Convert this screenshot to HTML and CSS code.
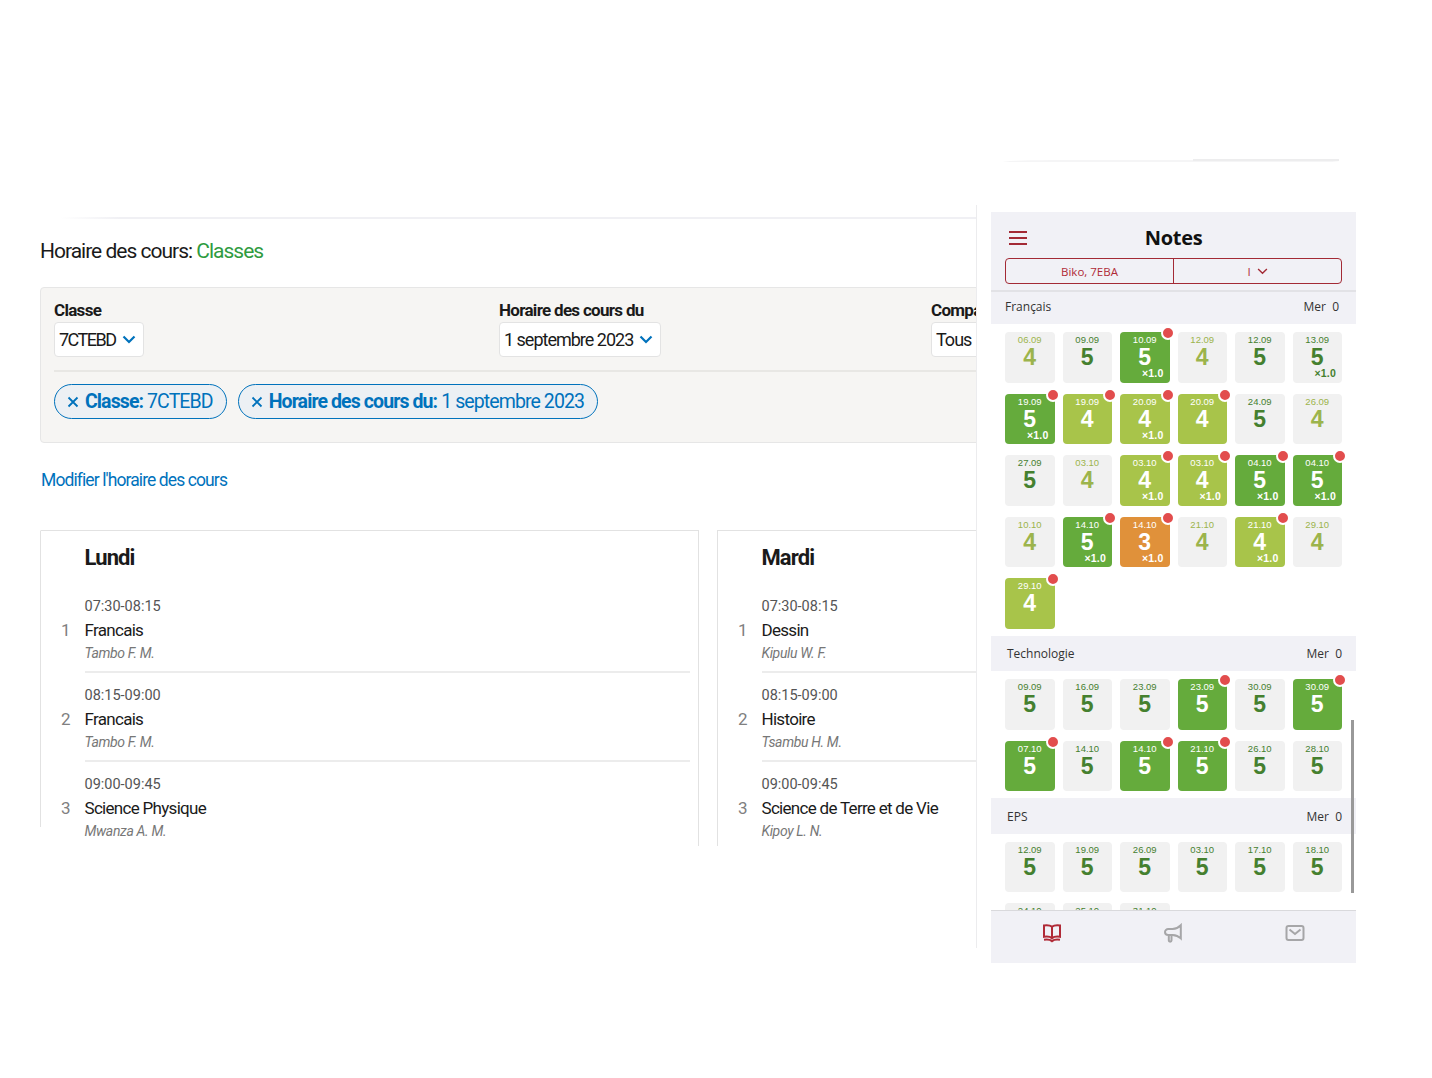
FILE: index.html
```html
<!DOCTYPE html>
<html lang="fr">
<head>
	<meta charset="utf-8">
	<title>Horaire des cours</title>
	<link rel="stylesheet" href="styles.css">
</head>
<body>
	<div class="stage">
		<section class="desk">
			<div class="topline"></div>
			<h1 class="title">Horaire des cours: <span class="green">Classes</span></h1>
			<div class="filters">
				<div class="fields">
					<div class="field field-class">
						<label>Classe</label>
						<div class="select">7CTEBD <svg class="chev" viewBox="0 0 14 9"><path d="M1.5 1.5 7 7l5.5-5.5"/></svg></div>
					</div>
					<div class="field field-date">
						<label>Horaire des cours du</label>
						<div class="select">1 septembre 2023 <svg class="chev" viewBox="0 0 14 9"><path d="M1.5 1.5 7 7l5.5-5.5"/></svg></div>
					</div>
					<div class="field field-comp">
						<label>Compagnie</label>
						<div class="select">Tous <svg class="chev" viewBox="0 0 14 9"><path d="M1.5 1.5 7 7l5.5-5.5"/></svg></div>
					</div>
				</div>
				<div class="chips">
					<span class="chip"><svg class="cross" viewBox="0 0 12 12"><path d="M1.5 1.5l9 9M10.5 1.5l-9 9"/></svg><b>Classe:</b> 7CTEBD</span>
					<span class="chip"><svg class="cross" viewBox="0 0 12 12"><path d="M1.5 1.5l9 9M10.5 1.5l-9 9"/></svg><b>Horaire des cours du:</b> 1 septembre 2023</span>
				</div>
			</div>
			<a class="edit" href="#">Modifier l'horaire des cours</a>
			<div class="days">
				<article class="day day-first">
					<h2>Lundi</h2>
					<div class="lesson">
						<div class="time">07:30-08:15</div>
						<div class="name"><span class="num">1</span>Francais</div>
						<div class="teacher">Tambo F. M.</div>
					</div>
					<div class="lesson">
						<div class="time">08:15-09:00</div>
						<div class="name"><span class="num">2</span>Francais</div>
						<div class="teacher">Tambo F. M.</div>
					</div>
					<div class="lesson">
						<div class="time">09:00-09:45</div>
						<div class="name"><span class="num">3</span>Science Physique</div>
						<div class="teacher">Mwanza A. M.</div>
					</div>
				</article>
				<article class="day">
					<h2>Mardi</h2>
					<div class="lesson">
						<div class="time">07:30-08:15</div>
						<div class="name"><span class="num">1</span>Dessin</div>
						<div class="teacher">Kipulu W. F.</div>
					</div>
					<div class="lesson">
						<div class="time">08:15-09:00</div>
						<div class="name"><span class="num">2</span>Histoire</div>
						<div class="teacher">Tsambu H. M.</div>
					</div>
					<div class="lesson">
						<div class="time">09:00-09:45</div>
						<div class="name"><span class="num">3</span>Science de Terre et de Vie</div>
						<div class="teacher">Kipoy L. N.</div>
					</div>
				</article>
			</div>
		</section>

		<div class="side">
			<div class="smudge"><span></span></div>
			<section class="phone">
				<header class="bar">
					<div class="bar-top">
						<div class="burger"><i></i><i></i><i></i></div>
						<h2>Notes</h2>
					</div>
					<div class="switch">
						<span>Biko, 7EBA</span>
						<span>I <svg class="chev-red" viewBox="0 0 12 8"><path d="M1 1.2 6 6l5-4.8"/></svg></span>
					</div>
				</header>
				<div class="notes">
					<div class="subject first"><span>Français</span><span>Mer&nbsp; 0</span></div>
					<div class="tiles tiles-first">
						<div class="tile pale4"><span class="date">06.09</span><span class="mark">4</span></div>
						<div class="tile pale5"><span class="date">09.09</span><span class="mark">5</span></div>
						<div class="tile fill5 new"><span class="date">10.09</span><span class="mark">5</span><span class="coef">×1.0</span></div>
						<div class="tile pale4"><span class="date">12.09</span><span class="mark">4</span></div>
						<div class="tile pale5"><span class="date">12.09</span><span class="mark">5</span></div>
						<div class="tile pale5"><span class="date">13.09</span><span class="mark">5</span><span class="coef">×1.0</span></div>
						<div class="tile fill5 new"><span class="date">19.09</span><span class="mark">5</span><span class="coef">×1.0</span></div>
						<div class="tile fill4 new"><span class="date">19.09</span><span class="mark">4</span></div>
						<div class="tile fill4 new"><span class="date">20.09</span><span class="mark">4</span><span class="coef">×1.0</span></div>
						<div class="tile fill4 new"><span class="date">20.09</span><span class="mark">4</span></div>
						<div class="tile pale5"><span class="date">24.09</span><span class="mark">5</span></div>
						<div class="tile pale4"><span class="date">26.09</span><span class="mark">4</span></div>
						<div class="tile pale5"><span class="date">27.09</span><span class="mark">5</span></div>
						<div class="tile pale4"><span class="date">03.10</span><span class="mark">4</span></div>
						<div class="tile fill4 new"><span class="date">03.10</span><span class="mark">4</span><span class="coef">×1.0</span></div>
						<div class="tile fill4 new"><span class="date">03.10</span><span class="mark">4</span><span class="coef">×1.0</span></div>
						<div class="tile fill5 new"><span class="date">04.10</span><span class="mark">5</span><span class="coef">×1.0</span></div>
						<div class="tile fill5 new"><span class="date">04.10</span><span class="mark">5</span><span class="coef">×1.0</span></div>
						<div class="tile pale4"><span class="date">10.10</span><span class="mark">4</span></div>
						<div class="tile fill5 new"><span class="date">14.10</span><span class="mark">5</span><span class="coef">×1.0</span></div>
						<div class="tile fill3 new"><span class="date">14.10</span><span class="mark">3</span><span class="coef">×1.0</span></div>
						<div class="tile pale4"><span class="date">21.10</span><span class="mark">4</span></div>
						<div class="tile fill4 new"><span class="date">21.10</span><span class="mark">4</span><span class="coef">×1.0</span></div>
						<div class="tile pale4"><span class="date">29.10</span><span class="mark">4</span></div>
						<div class="tile fill4 new"><span class="date">29.10</span><span class="mark">4</span></div>
					</div>
					<div class="subject"><span>Technologie</span><span>Mer&nbsp; 0</span></div>
					<div class="tiles">
						<div class="tile pale5"><span class="date">09.09</span><span class="mark">5</span></div>
						<div class="tile pale5"><span class="date">16.09</span><span class="mark">5</span></div>
						<div class="tile pale5"><span class="date">23.09</span><span class="mark">5</span></div>
						<div class="tile fill5 new"><span class="date">23.09</span><span class="mark">5</span></div>
						<div class="tile pale5"><span class="date">30.09</span><span class="mark">5</span></div>
						<div class="tile fill5 new"><span class="date">30.09</span><span class="mark">5</span></div>
						<div class="tile fill5 new"><span class="date">07.10</span><span class="mark">5</span></div>
						<div class="tile pale5"><span class="date">14.10</span><span class="mark">5</span></div>
						<div class="tile fill5 new"><span class="date">14.10</span><span class="mark">5</span></div>
						<div class="tile fill5 new"><span class="date">21.10</span><span class="mark">5</span></div>
						<div class="tile pale5"><span class="date">26.10</span><span class="mark">5</span></div>
						<div class="tile pale5"><span class="date">28.10</span><span class="mark">5</span></div>
					</div>
					<div class="subject"><span>EPS</span><span>Mer&nbsp; 0</span></div>
					<div class="tiles">
						<div class="tile pale5"><span class="date">12.09</span><span class="mark">5</span></div>
						<div class="tile pale5"><span class="date">19.09</span><span class="mark">5</span></div>
						<div class="tile pale5"><span class="date">26.09</span><span class="mark">5</span></div>
						<div class="tile pale5"><span class="date">03.10</span><span class="mark">5</span></div>
						<div class="tile pale5"><span class="date">17.10</span><span class="mark">5</span></div>
						<div class="tile pale5"><span class="date">18.10</span><span class="mark">5</span></div>
						<div class="tile pale5"><span class="date">24.10</span><span class="mark">5</span></div>
						<div class="tile pale5"><span class="date">25.10</span><span class="mark">5</span></div>
						<div class="tile pale5"><span class="date">31.10</span><span class="mark">5</span></div>
					</div>
					<div class="scroll"></div>
				</div>
				<nav class="tabs">
					<svg class="tab tab-on" viewBox="0 0 20 20"><path d="M10 3.800C8.400 2.400 5 2 2 2.400v11.400c3-.4 6.400 0 8 1.300 1.600-1.300 5-1.700 8-1.300V2.400C15 2 11.600 2.400 10 3.800zM10 3.800v11.300M2 16.800c3-.4 6.400 0 8 1.300 1.600-1.300 5-1.700 8-1.300"/></svg>
					<svg class="tab" viewBox="0 0 20 20"><path d="M17.800 2.200v13.200c-2.400-2.300-5.200-3.300-8.200-3.500H5.200C3.500 11.900 2 10.700 2 9s1.500-2.900 3.200-2.900h4.400c3-.2 5.800-1.500 8.200-3.900zM5.800 12.200v5.300c0 1.500 2.700 1.500 2.700 0v-5.300"/></svg>
					<svg class="tab" viewBox="0 0 20 20"><rect x="1.500" y="3" width="17" height="14" rx="2"/><path d="M4.500 6.500 10 11l5.500-4.500"/></svg>
				</nav>
			</section>
		</div>
	</div>
</body>
</html>
```
FILE: styles.css
```css
/*   #0072bc; /*link blue*/
/*   #a32a35; /*phone red*/
/*   #f6f5f3; /*filter gray*/
html, body{
	margin:0;
	background-color:#fff;
}
.stage{
	display:flex;
	width:1432px;
	height:1078px;
	overflow:hidden;
}

/* left window */
.desk{
	box-sizing:border-box;
	width:977px;
	height:743px;
	margin-top:205px;
	padding-left:40px;
	border-right:1px solid #ececee;
	overflow:hidden;
	font-family:"Roboto","Liberation Sans",sans-serif;
	color:#1a1a1a;
	flex:none;
}
.topline{
	height:2px;
	margin:12px 0 0 20px;
	background:linear-gradient(to right,#fff,#f0f0f4 60px);
}
.title{
	margin:0;
	padding-top:19px;
	height:48px;
	box-sizing:border-box;
	font-size:21px;
	line-height:26px;
	font-weight:400;
	letter-spacing:-1px;
}
.green{
	color:#2f9b3f;
}
.filters{
	box-sizing:border-box;
	width:960px;
	height:156px;
	margin-top:20px;
	padding:12px 13px 0;
	background-color:#f6f5f3;
	border:1px solid #e6e6e6;
	border-radius:4px;
}
.fields{
	display:flex;
	height:70px;
	border-bottom:2px solid #e8e7e4;
}
.field{
	flex:none;
}
.field-class{
	width:445px;
}
.field-date{
	width:432px;
}
.field label{
	display:block;
	height:22px;
	font-size:17px;
	line-height:20px;
	font-weight:700;
	letter-spacing:-0.7px;
}
.select{
	display:inline-flex;
	align-items:center;
	gap:6px;
	box-sizing:border-box;
	height:35px;
	padding:0 7px 0 4px;
	background-color:#fff;
	border:1px solid #e3e3e3;
	border-radius:4px;
	font-size:18px;
	letter-spacing:-1px;
}
.field-class .select{
	letter-spacing:-1.5px;
}
.chev{
	width:14px;
	height:9px;
	fill:none;
	stroke:#0072bc;
	stroke-width:2.2;
}
.chips{
	display:flex;
	gap:11px;
	margin-top:12px;
}
.chip{
	display:flex;
	align-items:center;
	box-sizing:border-box;
	height:35px;
	padding:0 13px 0 12px;
	background-color:#ecf0f4;
	border:1px solid #0072bc;
	border-radius:18px;
	font-size:19.500px;
	letter-spacing:-0.9px;
	color:#0072bc;
	white-space:pre;
}
.chip b{
	font-weight:700;
	letter-spacing:-0.9px;
}
.cross{
	width:12px;
	height:12px;
	margin-right:6px;
	fill:none;
	stroke:#0072bc;
	stroke-width:1.8;
}
.edit{
	display:block;
	margin:26px 0 0 1px;
	height:22px;
	font-size:17.500px;
	line-height:22px;
	letter-spacing:-0.9px;
	color:#0072bc;
	text-decoration:none;
}
.days{
	display:flex;
	gap:18px;
	margin-top:39px;
	height:316px;
}
.day{
	position:relative;
	box-sizing:border-box;
	width:659px;
	height:316px;
	padding:0 8px 0 43.500px;
	border:1px solid #e2e2e2;
	border-bottom:0;
	flex:none;
}
.day-first{
	border-left-color:transparent;
}
/* first card's left edge stops short of the text */
.day-first::before{
	content:"";
	position:absolute;
	left:-1px;
	top:0;
	width:1px;
	height:296px;
	background-color:#e2e2e2;
}
.day h2{
	margin:0;
	height:53px;
	font-size:22px;
	line-height:53px;
	font-weight:700;
	letter-spacing:-0.9px;
}
.lesson{
	box-sizing:border-box;
	height:89px;
	padding-top:12px;
	border-bottom:2px solid #ececec;
}
.lesson:last-child{
	border-bottom:0;
}
.time{
	height:21px;
	font-size:14.500px;
	line-height:21px;
	color:#555;
}
.name{
	position:relative;
	height:26px;
	font-size:17px;
	line-height:27px;
	letter-spacing:-0.7px;
}
.num{
	position:absolute;
	left:-23.500px;
	width:12px;
	color:#808080;
	font-size:17px;
}
.teacher{
	height:20px;
	font-size:14px;
	line-height:20px;
	font-style:italic;
	color:#777;
	letter-spacing:-0.35px;
}

/* phone */
.side{
	margin-left:14px;
	width:365px;
	flex:none;
}
.smudge{
	display:flex;
	justify-content:flex-end;
	box-sizing:border-box;
	width:336px;
	height:3px;
	margin:159px 0 50px 12px;
	border-bottom:2px solid #f5f5f6;
	border-radius:50% 50% 0 0 / 100% 100% 0 0;
}
.smudge span{
	display:block;
	width:146px;
	height:2px;
	background-color:#ededee;
}
.phone{
	display:flex;
	flex-direction:column;
	height:751px;
	font-family:"Open Sans","Noto Sans",sans-serif;
}
.bar{
	box-sizing:border-box;
	height:80px;
	padding:0 14px;
	background-color:#f1f1f6;
	border-bottom:2px solid #e2e2e6;
	flex:none;
}
.bar-top{
	position:relative;
	height:47px;
}
.bar-top h2{
	margin:0;
	padding-top:12px;
	text-align:center;
	font-size:20px;
	line-height:28px;
	font-weight:700;
	letter-spacing:-0.3px;
	color:#111;
}
.burger{
	position:absolute;
	left:4px;
	top:19px;
	display:flex;
	flex-direction:column;
	gap:4px;
	width:18px;
}
.burger i{
	display:block;
	height:2px;
	background-color:#a32a35;
}
.switch{
	display:flex;
	box-sizing:border-box;
	height:26px;
	margin-top:-1px;
	border:1px solid #a32a35;
	border-radius:4px;
	font-size:11.500px;
	color:#b02a37;
}
.switch span{
	display:flex;
	align-items:center;
	justify-content:center;
	gap:6px;
	width:50%;
}
.switch span + span{
	border-left:1px solid #a32a35;
}
.chev-red{
	width:11px;
	height:7px;
	fill:none;
	stroke:#a32a35;
	stroke-width:1.6;
}
.notes{
	position:relative;
	flex:1;
	overflow:hidden;
}
.subject{
	display:flex;
	justify-content:space-between;
	align-items:center;
	box-sizing:border-box;
	height:35.500px;
	padding:0 14px 0 16px;
	background-color:#f1f1f6;
	font-size:12px;
	color:#333;
}
.subject.first{
	height:32px;
	padding:0 17px 3px 14px;
}
.tiles{
	display:grid;
	grid-template-columns:repeat(6,1fr);
	gap:10.750px 8px;
	padding:8px 14px 7.250px;
}
.tiles-first{
	row-gap:11px;
}
.tile{
	position:relative;
	box-sizing:border-box;
	height:50.500px;
	padding-top:2px;
	border-radius:4px;
	text-align:center;
	font-family:"Liberation Sans",sans-serif;
}
.date{
	display:block;
	height:11px;
	font-size:9.500px;
	line-height:11px;
}
.mark{
	display:block;
	height:25px;
	font-size:23px;
	line-height:25px;
	font-weight:700;
}
.coef{
	position:absolute;
	right:6px;
	bottom:3.500px;
	font-size:10.500px;
	line-height:12px;
	font-weight:700;
	letter-spacing:0.2px;
}
.pale4{
	background-color:#f1f1f1;
	color:#9cb44c;
}
.pale5{
	background-color:#f1f1f1;
	color:#45802f;
}
.fill5{
	background-color:#65ab3c;
	color:#fff;
}
.fill4{
	background-color:#a8c44a;
	color:#fff;
}
.fill3{
	background-color:#e0913a;
	color:#fff;
}
.new::after{
	content:"";
	position:absolute;
	right:-5px;
	top:-6px;
	width:10px;
	height:10px;
	background-color:#e24d4d;
	border:2px solid #fff;
	border-radius:50%;
}
.scroll{
	position:absolute;
	right:2px;
	top:428px;
	width:3px;
	height:173px;
	background-color:#999;
}
.tabs{
	display:flex;
	justify-content:space-around;
	box-sizing:border-box;
	height:53px;
	padding:12px 0 0;
	background-color:#f1f1f6;
	border-top:1px solid #d9d9dc;
	flex:none;
}
.tab{
	width:20px;
	height:20px;
	fill:none;
	stroke:#a6a6a8;
	stroke-width:2;
}
.tab-on{
	stroke:#b02a37;
}
```
